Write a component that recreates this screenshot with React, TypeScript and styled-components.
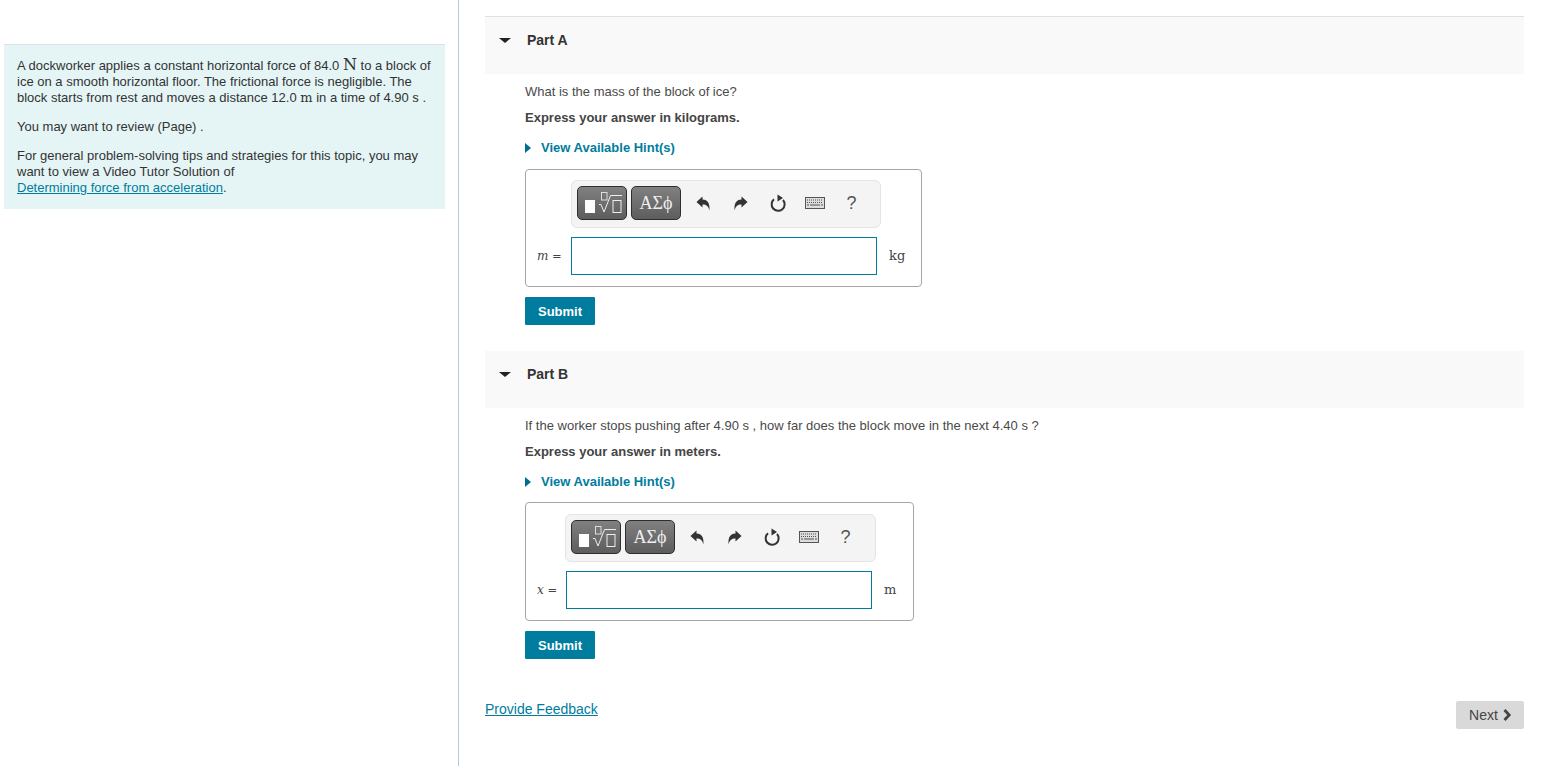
import styled, { createGlobalStyle } from 'styled-components'

const GlobalStyle = createGlobalStyle`
  html, body {
    margin: 0;
    padding: 0;
    background: #fff;
    overflow: hidden;
  }

  body {
    font-family: "Liberation Sans", Arial, sans-serif;
    font-size: 13px;
    color: #333;
  }
`

const Page = styled.div`
  display: flex;
  width: 1557px;
  height: 766px;
`

const LeftColumn = styled.aside`
  box-sizing: border-box;
  width: 459px;
  height: 100%;
  padding: 44px 13px 0 4px;
  border-right: 1px solid #b5c9dc;
`

const Intro = styled.div`
  box-sizing: border-box;
  height: 165px;
  padding: 13px 13px 0;
  background: #e5f5f6;
  border-top: 1px solid #d9e2e4;
  color: #333;
  line-height: 16px;
`

const IntroText = styled.p`
  margin: 0 0 13px;
`

const Unit = styled.span<{ $size?: number }>`
  display: inline-block;
  line-height: 14px;
  font-family: "DejaVu Serif", "Liberation Serif", serif;
  font-size: ${({ $size }) => $size || 13}px;
`

const Link = styled.a`
  color: #007c9e;
  text-decoration: underline;
`

const Main = styled.main`
  box-sizing: border-box;
  flex: 1;
  padding: 16px 33px 0 26px;
  display: flex;
  flex-direction: column;
`

const PartHeader = styled.div<{ $first?: boolean }>`
  box-sizing: border-box;
  height: ${({ $first }) => ($first ? 58 : 57)}px;
  display: flex;
  align-items: flex-start;
  padding: 15px 0 0 14px;
  background: #f9f9f9;
  border-top: ${({ $first }) => ($first ? '1px solid #e0e0e0' : 'none')};
  font-size: 14px;
  font-weight: bold;
  color: #333;
  line-height: 16px;
`

const Caret = styled.span`
  width: 0;
  height: 0;
  margin: 6px 16px 0 0;
  border-left: 6px solid transparent;
  border-right: 6px solid transparent;
  border-top: 5px solid #222;
`

const PartBody = styled.section`
  padding: 10px 0 26px 40px;
`

const Question = styled.p`
  margin: 0;
  line-height: 16px;
  color: #4a4a4a;
`

const Instruction = styled.p`
  margin: 10px 0 0;
  line-height: 16px;
  font-weight: bold;
  color: #444;
`

const HintToggle = styled.a`
  display: flex;
  align-items: center;
  gap: 10px;
  margin-top: 14px;
  line-height: 16px;
  font-weight: bold;
  color: #007c9e;
`

const HintCaret = styled.span`
  width: 0;
  height: 0;
  border-top: 5px solid transparent;
  border-bottom: 5px solid transparent;
  border-left: 6px solid #006f8e;
`

const AnswerBox = styled.div<{ $width: number; $height: number; $top: number; $padTop: number; $padLeft: number }>`
  box-sizing: border-box;
  width: ${({ $width }) => $width}px;
  height: ${({ $height }) => $height}px;
  margin-top: ${({ $top }) => $top}px;
  padding: ${({ $padTop }) => $padTop}px 0 0 ${({ $padLeft }) => $padLeft}px;
  background: #fff;
  border: 1px solid #a6a6a6;
  border-radius: 4px;
`

const Toolbar = styled.div<{ $width: number }>`
  box-sizing: border-box;
  width: ${({ $width }) => $width}px;
  height: 48px;
  display: flex;
  align-items: center;
  padding: 0 0 2px 5px;
  background: #f4f4f4;
  border: 1px solid #e4e4e4;
  border-radius: 6px;
`

const ButtonSet = styled.div`
  display: flex;
  gap: 4px;
  margin-right: 4px;
`

const TemplateButton = styled.div`
  box-sizing: border-box;
  width: 50px;
  height: 34px;
  display: flex;
  align-items: center;
  justify-content: center;
  background: linear-gradient(#808080, #5d5d5d);
  border: 1px solid #2e2e2e;
  border-radius: 5px;
  color: #eee;
  font-family: "Liberation Serif", serif;
  font-size: 18px;
`

const ToolIcon = styled.button`
  width: 37px;
  height: 34px;
  padding: 0;
  display: flex;
  align-items: center;
  justify-content: center;
  background: none;
  border: none;
  color: #555;
  font-family: "Liberation Sans", sans-serif;
  font-size: 18px;
`

const AnswerRow = styled.div<{ $left: number }>`
  display: flex;
  align-items: center;
  height: 38px;
  margin-top: 9px;
  margin-left: ${({ $left }) => -$left}px;
`

const VarLabel = styled.label<{ $width: number }>`
  width: ${({ $width }) => $width}px;
  padding-left: 11px;
  box-sizing: border-box;
  color: #444;
  font-family: "DejaVu Serif", "Liberation Serif", serif;
  font-size: 11.5px;

  i {
    font-size: 12px;
  }
`

const AnswerField = styled.div`
  box-sizing: border-box;
  width: 306px;
  height: 38px;
  background: #fff;
  border: 1px solid #007c9e;
`

const UnitLabel = styled.span`
  margin-left: 12px;
  padding-bottom: 2px;
  color: #444;
  font-family: "DejaVu Serif", "Liberation Serif", serif;
  font-size: 13px;
`

const SubmitButton = styled.button`
  display: block;
  width: 70px;
  height: 28px;
  margin-top: 10px;
  padding: 0;
  background: #007c9e;
  border: none;
  border-radius: 1px;
  color: #fff;
  font-family: "Liberation Sans", sans-serif;
  font-size: 13px;
  font-weight: bold;
`

const Footer = styled.footer`
  display: flex;
  justify-content: space-between;
  align-items: flex-start;
  margin-top: 16px;
`

const FeedbackLink = styled(Link)`
  font-size: 14px;
  line-height: 16px;
`

const NextButton = styled.button`
  width: 68px;
  height: 28px;
  padding: 0 0 0 1px;
  display: flex;
  align-items: center;
  justify-content: center;
  gap: 5px;
  background: #d9d9d9;
  border: none;
  border-radius: 2px;
  color: #444;
  font-family: "Liberation Sans", sans-serif;
  font-size: 14px;
`

function TemplatesIcon() {
  return (
    <svg width="48" height="32" viewBox="0 0 48 32" fill="none">
      <rect x="7" y="13" width="10" height="13" fill="#fff" />
      <rect x="23.5" y="5.5" width="5.5" height="7.5" stroke="#ddd" />
      <path d="M21 17.5h2l3 7.5 6.5-16.5H44" stroke="#eee" />
      <rect x="35" y="13.5" width="8" height="12" stroke="#eee" />
    </svg>
  )
}

function UndoIcon({ flip }: { flip?: boolean }) {
  return (
    <svg width="15" height="15" viewBox="0 0 15 15" style={flip ? { transform: 'scaleX(-1)' } : undefined}>
      <path d="M0.5 6 6.5 0.5V3.6C11 3.6 14.2 6.8 13.4 14.5 12.4 10.6 10.5 8.6 6.5 8.6V11.5Z" fill="#333" />
    </svg>
  )
}

function ResetIcon() {
  return (
    <svg width="18" height="20" viewBox="0 0 18 20" fill="none">
      <path d="M14 7A6.5 6.5 0 1 1 5 6.3" stroke="#333" strokeWidth="2" />
      <path d="M8.5 1.5 14 5 8.5 8.5Z" fill="#333" />
    </svg>
  )
}

function KeyboardIcon() {
  return (
    <svg width="20" height="12" viewBox="0 0 20 12">
      <rect x="0.5" y="0.5" width="19" height="11" fill="#ddd" stroke="#555" />
      <path d="M2 3h16M2 5.5h16" stroke="#555" strokeWidth="1.2" strokeDasharray="1 1" />
      <path d="M2 8h2M5 8h10M16 8h2" stroke="#555" strokeWidth="1.2" />
    </svg>
  )
}

type PartProps = {
  name: string
  first?: boolean
  question: string
  instruction: string
  varName: string
  unit: string
  boxWidth: number
  boxHeight: number
  boxTop: number
  padTop: number
  padLeft: number
  toolbarWidth: number
  labelWidth: number
}

function Part(props: PartProps) {
  return (
    <>
      <PartHeader $first={props.first}>
        <Caret />
        {props.name}
      </PartHeader>
      <PartBody>
        <Question>{props.question}</Question>
        <Instruction>{props.instruction}</Instruction>
        <HintToggle>
          <HintCaret />
          View Available Hint(s)
        </HintToggle>
        <AnswerBox
          $width={props.boxWidth}
          $height={props.boxHeight}
          $top={props.boxTop}
          $padTop={props.padTop}
          $padLeft={props.padLeft}
        >
          <Toolbar $width={props.toolbarWidth}>
            <ButtonSet>
              <TemplateButton>
                <TemplatesIcon />
              </TemplateButton>
              <TemplateButton>ΑΣϕ</TemplateButton>
            </ButtonSet>
            <ToolIcon><UndoIcon /></ToolIcon>
            <ToolIcon><UndoIcon flip /></ToolIcon>
            <ToolIcon><ResetIcon /></ToolIcon>
            <ToolIcon><KeyboardIcon /></ToolIcon>
            <ToolIcon>?</ToolIcon>
          </Toolbar>
          <AnswerRow $left={props.padLeft}>
            <VarLabel $width={props.labelWidth}>
              <i>{props.varName}</i> =
            </VarLabel>
            <AnswerField />
            <UnitLabel>{props.unit}</UnitLabel>
          </AnswerRow>
        </AnswerBox>
        <SubmitButton>Submit</SubmitButton>
      </PartBody>
    </>
  )
}

export default function App() {
  return (
    <Page>
      <GlobalStyle />
      <LeftColumn>
        <Intro>
          <IntroText>
            A dockworker applies a constant horizontal force of 84.0 <Unit $size={16}>N</Unit> to a block of ice on a
            smooth horizontal floor. The frictional force is negligible. The block starts from rest and moves a
            distance 12.0 <Unit>m</Unit> in a time of 4.90 <Unit>s</Unit> .
          </IntroText>
          <IntroText>You may want to review (Page) .</IntroText>
          <IntroText>
            For general problem-solving tips and strategies for this topic, you may want to view a Video Tutor
            Solution of
            <br />
            <Link href="#">Determining force from acceleration</Link>.
          </IntroText>
        </Intro>
      </LeftColumn>
      <Main>
        <Part
          first
          name="Part A"
          question="What is the mass of the block of ice?"
          instruction="Express your answer in kilograms."
          varName="m"
          unit="kg"
          boxWidth={397}
          boxHeight={118}
          boxTop={13}
          padTop={10}
          padLeft={45}
          toolbarWidth={310}
          labelWidth={45}
        />
        <Part
          name="Part B"
          question="If the worker stops pushing after 4.90 s , how far does the block move in the next 4.40 s ?"
          instruction="Express your answer in meters."
          varName="x"
          unit="m"
          boxWidth={389}
          boxHeight={119}
          boxTop={12}
          padTop={11}
          padLeft={39}
          toolbarWidth={311}
          labelWidth={40}
        />
        <Footer>
          <FeedbackLink href="#">Provide Feedback</FeedbackLink>
          <NextButton>
            Next
            <svg width="9" height="12" viewBox="0 0 9 12">
              <path d="M1.5 1 6.2 6 1.5 11" fill="none" stroke="#444" strokeWidth="2.8" />
            </svg>
          </NextButton>
        </Footer>
      </Main>
    </Page>
  )
}
